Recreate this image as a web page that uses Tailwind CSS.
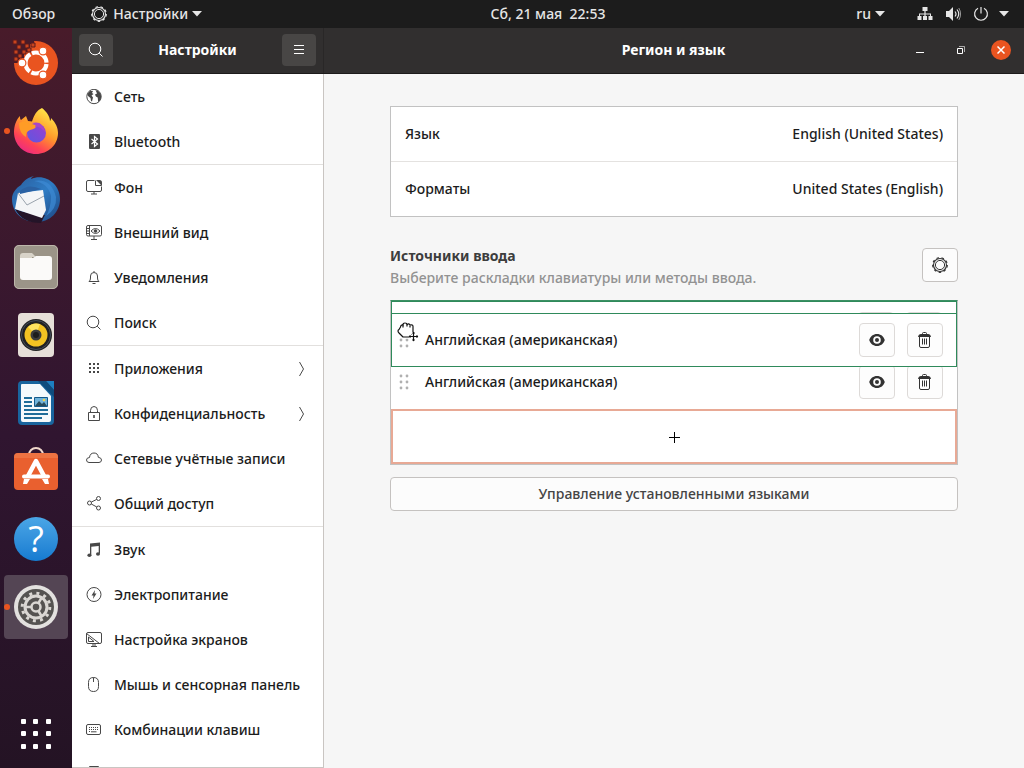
<!DOCTYPE html>
<html lang="ru">
<head>
<meta charset="utf-8">
<meta name="viewport" content="width=device-width, initial-scale=1">
<title>Настройки</title>
<script src="https://cdn.jsdelivr.net/npm/@tailwindcss/browser@4"></script>
</head>
<body class="flex h-screen flex-col overflow-hidden bg-[#f6f6f6] font-['Noto_Sans','Open_Sans',sans-serif] text-sm font-medium text-[#1c1c1c]">

<svg class="hidden" aria-hidden="true">
  <symbol id="gear" viewBox="0 0 16 16" fill="none" stroke="currentColor">
    <circle cx="8" cy="8" r="6.500" stroke-width="1.1"/>
    <circle cx="8" cy="8" r="4.600" stroke-width="1"/>
    <circle cx="8" cy="8" r="7.300" stroke-width="1.2" stroke-dasharray="2.550 2.550"/>
  </symbol>
  <symbol id="search" viewBox="0 0 16 16" fill="none" stroke="currentColor">
    <circle cx="7" cy="7" r="5.8"/><path d="M11.2 11.2 14.500 14.500"/>
  </symbol>
  <symbol id="eye" viewBox="0 0 16 16">
    <path fill="currentColor" fill-rule="evenodd" d="M8 2C4.200 2 1.400 4.300.2 8 1.400 11.700 4.200 14 8 14s6.600-2.300 7.800-6C14.600 4.300 11.800 2 8 2Zm0 2.200a3.800 3.800 0 1 1 0 7.600 3.800 3.800 0 0 1 0-7.600Z"/>
    <circle cx="8" cy="8" r="2" fill="currentColor"/>
  </symbol>
  <symbol id="trash" viewBox="0 0 16 16" fill="none" stroke="currentColor">
    <path d="M2.500 4.500v9.500q0 1.500 1.500 1.500h7q1.500 0 1.500-1.500V4.500M5.500 3V1.500q0-1 1-1h2q1 0 1 1V3M5.500 6.500v6M7.500 6.500v6M9.500 6.500v6"/>
    <path fill="currentColor" stroke="none" d="M1 5q.5-3 3-3h7q2.500 0 3 3Z"/>
  </symbol>
  <symbol id="chevron" viewBox="0 0 8 16" fill="none" stroke="currentColor">
    <path d="M1.500 1 5.500 8l-4 7"/>
  </symbol>
  <symbol id="grip" viewBox="0 0 10 16" fill="currentColor">
    <circle cx="2" cy="2" r="1.400"/><circle cx="8" cy="2" r="1.400"/><circle cx="2" cy="8" r="1.400"/><circle cx="8" cy="8" r="1.400"/><circle cx="2" cy="14" r="1.400"/><circle cx="8" cy="14" r="1.400"/>
  </symbol>
  <symbol id="caret" viewBox="0 0 10 6"><path fill="currentColor" d="M0 0h10L5 5.500Z"/></symbol>
</svg>

<header class="grid h-7 shrink-0 grid-cols-[1fr_auto_1fr] items-center bg-[#1c1c1c] pb-px text-[#e6e6e6]">
  <div class="flex items-center gap-9 pl-3">
    <button type="button">Обзор</button>
    <button type="button" class="flex items-center gap-1">
      <svg class="mr-0.5 size-4"><use href="#gear"/></svg>
      <span>Настройки</span>
      <svg class="h-[6px] w-[10px]"><use href="#caret"/></svg>
    </button>
  </div>
  <button type="button" class="pl-[72px] text-center whitespace-pre">Сб, 21 мая  22:53</button>
  <div class="flex items-center justify-end pr-[15px]">
    <button type="button" class="flex items-center gap-1 pr-8">ru <svg class="h-[6px] w-[10px]"><use href="#caret"/></svg></button>
    <button type="button" class="flex items-center gap-3" aria-label="Системное меню">
      <svg class="size-4" viewBox="0 0 16 16" fill="currentColor"><path d="M5.500 1h5v4H8.600v2.500H14V10h1.500v4h-4v-4H13V8.600H8.600V10H10v4H6v-4h1.400V8.600H3V10h1.500v4h-4v-4H2V7.500h5.400V5H5.500Z"/></svg>
      <svg class="size-4" viewBox="0 0 16 16"><path fill="currentColor" d="M1 5h3l4-4v14l-4-4H1Z"/><path fill="none" stroke="currentColor" stroke-width="1.200" d="M10 5.500q2 2.500 0 5M12 3.500q3.500 4.500 0 9"/><path fill="none" stroke="#999" d="M13.800 2q3.600 6 0 12"/></svg>
      <svg class="size-4" viewBox="0 0 16 16" fill="none" stroke="currentColor" stroke-width="1.200"><path d="M5 2.200a6.400 6.400 0 1 0 6 0M8 1v6.500"/></svg>
      <svg class="-ml-0.5 h-[6px] w-[10px]"><use href="#caret"/></svg>
    </button>
  </div>
</header>

<div class="flex min-h-0 flex-1">
  <nav class="flex w-[72px] shrink-0 flex-col items-center gap-1 bg-linear-to-b from-[#481b2a] via-[#301530] via-55% to-[#241324] pt-[3px]" aria-label="Избранное">
    <button type="button" aria-label="Установить Ubuntu" class="flex size-16 items-center justify-center">
      <svg class="size-12" viewBox="0 0 48 48"><circle cx="24" cy="24" r="22" fill="#e95420"/><path fill="#481b2a" d="M0 0h22v5h-4v4h-3v4h-3v6H8v5H0Z"/><g fill="#c8441e" stroke="#5a1a1c"><path d="M1 1h4v4H1zM9 1h4v4H9zM5 6h4v4H5zM13 5h4v4h-4zM2 11h4v4H2zM19 4h4v4h-4zM10 11h4v4h-4zM6 15h4v4H6zM2 18h4v4H2zM15 9h4v4h-4z"/></g><circle cx="24" cy="24" r="10.500" fill="none" stroke="#fff" stroke-width="4.200" stroke-dasharray="20.200 1.790" stroke-dashoffset="-1"/><g fill="#fff" stroke="#e95420" stroke-width="1.200"><circle cx="10" cy="24" r="3.900"/><circle cx="31" cy="12" r="3.900"/><circle cx="31" cy="36" r="3.900"/></g></svg>
    </button>
    <button type="button" aria-label="Firefox" class="relative flex size-16 items-center justify-center">
      <span class="absolute left-0 size-[6px] rounded-full bg-[#e95420]"></span>
      <svg class="size-12" viewBox="0 0 48 48"><defs><linearGradient id="ff" x1=".8" y1="0" x2=".2" y2="1"><stop offset="0" stop-color="#fff14d"/><stop offset=".45" stop-color="#ff9a2a"/><stop offset=".75" stop-color="#ff4355"/><stop offset="1" stop-color="#e8268a"/></linearGradient><linearGradient id="fp" x1="0" y1="1" x2="1" y2="0"><stop offset="0" stop-color="#5e56e0"/><stop offset="1" stop-color="#9b3fd0"/></linearGradient></defs><path fill="url(#ff)" d="M30 1c5 4 8 9 8 13 1-1 1-2 1-3 5 5 7 10 7 15C46 38 36 47 24 47S2 38 2 25C2 19 4 13 8 9c0 2 0 3 1 4l5-4 2 5 4 .500C22 8 25 3 30 1Z"/><circle cx="24.500" cy="26" r="9.500" fill="url(#fp)"/><path fill="#ff9c26" d="M7 16q7-4 11 1l7 1q-1 4-7 5-5 2-4 7-7-4-7-14Z"/><path fill="#a846c8" d="M20 16q11-3 13 9-5-6-10-5 2-2-3-4Z"/></svg>
    </button>
    <button type="button" aria-label="Thunderbird" class="flex size-16 items-center justify-center">
      <svg class="size-12" viewBox="0 0 48 48"><defs><linearGradient id="tb" x1="0" y1="0" x2="1" y2="1"><stop offset="0" stop-color="#2a5c9c"/><stop offset=".5" stop-color="#2f7cc4"/><stop offset="1" stop-color="#1c4480"/></linearGradient></defs><path fill="url(#tb)" d="M22 1c-2 1-3 2-3 3 14-6 29 5 29 20 0 13-10 23-23 23C11 47 0 38 0 24c0-6 4-11 9-14C12 5 17 2 22 1Z"/><path fill="#241428" d="M3 34q12 5 30 6l-4 8Q10 48 3 34Z"/><path fill="#f4f5f7" d="m6 18 25-3 3 20-4 8L3 34Z"/><path fill="none" stroke="#9aa3ad" d="m6 18 9 12 17-9"/><path fill="#3d8ad4" d="M22 6q14 2 17 15 0 12-5 20 11-7 10-19Q39 3 22 6Z" opacity=".7"/><path fill="#2b62a4" d="M8 16q8-8 21-2l-21 5Z"/></svg>
    </button>
    <button type="button" aria-label="Файлы" class="flex size-16 items-center justify-center">
      <svg class="size-12" viewBox="0 0 48 48"><rect x="2" y="2" width="44" height="44" rx="5" fill="#9b9488"/><rect x="2.500" y="2.500" width="43" height="43" rx="4.500" fill="none" stroke="#bdb7ab"/><path fill="#d8d3c9" d="M8 13q0-3 3-3h9l4 4h-4v6H8Z"/><path fill="#fbfaf9" d="M8 15h13l3-2h13q3 0 3 3v18q0 3-3 3H11q-3 0-3-3Z"/></svg>
    </button>
    <button type="button" aria-label="Rhythmbox" class="flex size-16 items-center justify-center">
      <svg class="size-12" viewBox="0 0 48 48"><rect x="6" y="2" width="36" height="44" rx="4" fill="#e6dfd8"/><circle cx="24" cy="24" r="16" fill="#222"/><circle cx="24" cy="24" r="14.500" fill="none" stroke="#444c5c"/><circle cx="24" cy="24" r="11.500" fill="#f3c322"/><path fill="#ffe460" d="M24 24 16 16q5-5 12-3Z"/><circle cx="24" cy="24" r="5.500" fill="#3c3c3c"/><circle cx="24" cy="24" r="3" fill="#1d1d1d"/></svg>
    </button>
    <button type="button" aria-label="LibreOffice Writer" class="flex size-16 items-center justify-center">
      <svg class="size-12" viewBox="0 0 48 48"><path fill="#19659e" d="M10 2h20l12 13v27q0 4-4 4H10q-4 0-4-4V6q0-4 4-4Z"/><path fill="#f5fafc" d="M10 5h18l11 12v24q0 2-2 2H11q-2 0-2-2V6q0-1 1-1Z"/><path fill="#0f4c7d" d="M26 2h8l8 9v7Z"/><path fill="#1d7fc0" d="M34 2h8v9Z"/><g stroke="#1f6d99" stroke-width="2"><path d="M12 19h8M12 23h8M12 27h8M12 31h24M12 35h24M12 39h18"/></g><path fill="#6fb3da" stroke="#155a8a" d="M22.500 18.500h13v9h-13z"/><path fill="#264b5c" d="m23 27 4-5 3 3 2-2 3 4Z"/><circle cx="32" cy="21" r="1.300" fill="#f3d24b"/></svg>
    </button>
    <button type="button" aria-label="Ubuntu Software" class="flex size-16 items-center justify-center">
      <svg class="size-12" viewBox="0 0 48 48"><path fill="none" stroke="#f1d8cb" stroke-width="2" d="M17 11v-3a7 7 0 0 1 14 0v3"/><rect x="2" y="6" width="44" height="37" rx="4" fill="#e9602f"/><path fill="#f08050" d="M6 6h36q4 0 4 4v1H2v-1q0-4 4-4Z" opacity=".6"/><path fill="none" stroke="#fff" stroke-width="4.500" stroke-linejoin="round" d="M16 29 24 14l8 15"/><path fill="none" stroke="#fff" stroke-width="4" stroke-linecap="round" d="M12 29.500h24"/><path fill="#fff" d="M12 32h6l-3 5h-4zM30 32h6l1 5h-4z"/></svg>
    </button>
    <button type="button" aria-label="Справка" class="flex size-16 items-center justify-center">
      <span class="flex size-11 items-center justify-center rounded-full bg-linear-to-b from-[#4aa6e6] to-[#157bd0] font-['Open_Sans'] text-4xl font-normal text-white">?</span>
    </button>
    <button type="button" aria-label="Настройки" class="relative flex size-16 items-center justify-center rounded bg-[#544554]">
      <span class="absolute left-0 size-[6px] rounded-full bg-[#e95420]"></span>
      <svg class="size-12" viewBox="0 0 48 48"><circle cx="24" cy="24" r="22" fill="#e3e1df"/><circle cx="24" cy="24" r="18" fill="#555351"/><g fill="none" stroke="#dad7d3"><circle cx="24" cy="24" r="11" stroke-width="3"/><circle cx="24" cy="24" r="13.800" stroke-width="3" stroke-dasharray="3 4.225"/><circle cx="24" cy="24" r="4.500" stroke-width="2.500"/><path stroke-width="2.500" d="M19 24h-6M26.500 20l3.500-6M26.500 28l3.500 6"/></g></svg>
    </button>
    <button type="button" aria-label="Показать приложения" class="mt-auto mb-[14px] p-1">
      <svg class="size-8" viewBox="0 0 32 32" fill="#fff"><rect x="1" y="1" width="5" height="5" rx="1"/><rect x="13" y="1" width="5" height="5" rx="1"/><rect x="26" y="1" width="5" height="5" rx="1"/><rect x="1" y="13" width="5" height="5" rx="1"/><rect x="13" y="13" width="5" height="5" rx="1"/><rect x="26" y="13" width="5" height="5" rx="1"/><rect x="1" y="26" width="5" height="5" rx="1"/><rect x="13" y="26" width="5" height="5" rx="1"/><rect x="26" y="26" width="5" height="5" rx="1"/></svg>
    </button>
  </nav>

  <section class="flex min-w-0 flex-1 flex-col">
    <div class="flex h-[46px] shrink-0 border-b border-[#1d1b1b] bg-[#312f2f] text-white">
      <div class="flex w-[252px] shrink-0 items-center justify-between border-r border-[#292727] px-[7px] pb-px">
        <button type="button" aria-label="Поиск" class="flex h-8 w-[34px] items-center justify-center rounded bg-[#484645]"><svg class="size-4"><use href="#search"/></svg></button>
        <h1 class="font-bold">Настройки</h1>
        <button type="button" aria-label="Меню" class="flex h-8 w-[34px] items-center justify-center rounded bg-[#484645]"><svg class="size-4" viewBox="0 0 16 16" stroke="currentColor"><path d="M3 3.500h10M3 7.500h10M3 11.500h10"/></svg></button>
      </div>
      <div class="grid flex-1 grid-cols-[1fr_auto_1fr] items-center pr-[13px] pb-px">
        <h2 class="col-start-2 pl-3 font-bold">Регион и язык</h2>
        <div class="flex items-center justify-end gap-6">
          <button type="button" aria-label="Свернуть"><svg class="size-4" viewBox="0 0 16 16" stroke="currentColor"><path d="M4 10.500h8"/></svg></button>
          <button type="button" aria-label="Восстановить"><svg class="size-4" viewBox="0 0 16 16" fill="none" stroke="currentColor"><path d="M5.500 6.500h5v5h-5z"/><path opacity=".6" d="M7 4.500h5.500V10"/></svg></button>
          <button type="button" aria-label="Закрыть" class="-ml-px flex size-5 items-center justify-center rounded-full bg-[#e95420]"><svg class="size-2" viewBox="0 0 8 8" stroke="currentColor" stroke-width="1.500"><path d="m.5.5 7 7M7.500.5l-7 7"/></svg></button>
        </div>
      </div>
    </div>

    <div class="flex min-h-0 flex-1">
      <aside class="w-[252px] shrink-0 overflow-hidden border-r border-b border-[#c9c5c2] bg-white">
        <ul class="divide-y divide-[#e2e0de] [&_svg]:text-[#484848]">
          <li>
            <a href="#net" class="flex h-[45px] items-center gap-3 px-[14px]"><svg class="size-4 shrink-0" viewBox="0 0 16 16"><circle cx="8" cy="7.500" r="7.200" fill="none" stroke="currentColor"/><path fill="currentColor" d="M1.500 5 4 2l3 0-1 2 1.500 1-2 1.500 1.500 2L6 12.500 5 12l-.5-3L2 7ZM9.500 1q5 1 5.700 6.500-.2 4-3 5.500l-.5-4.500-1.800-1L9 5.500l2-1Z"/></svg>Сеть</a>
            <a href="#bt" class="flex h-[45px] items-center gap-3 px-[14px]"><svg class="size-4 shrink-0" viewBox="0 0 16 16"><rect x="3" width="11" height="15" rx="1" fill="currentColor"/><path fill="none" stroke="#fff" stroke-width="1.200" d="m5.500 5 6 5-3 2.500v-10l3 2.500-6 5"/></svg>Bluetooth</a>
          </li>
          <li>
            <a href="#bg" class="flex h-[45px] items-center gap-3 px-[14px]"><svg class="size-4 shrink-0" viewBox="0 0 16 16" fill="none" stroke="currentColor"><path d="M8.500.500H2Q.500.500.500 2v8q0 1.500 1.500 1.500h12q1.500 0 1.500-1.500V6.500M5 14h6M8 12v2"/><path d="M9.500.500v5h6"/><path fill="currentColor" stroke="none" d="M10 0h3.500Q16 0 16 2.500V6Z"/></svg>Фон</a>
            <a href="#look" class="flex h-[45px] items-center gap-3 px-[14px]"><svg class="size-4 shrink-0" viewBox="0 0 16 16" fill="none" stroke="currentColor"><path d="M2 .500h12q1.500 0 1.500 1.500v7.500q0 1.500-1.500 1.500H2Q.500 11 .500 9.500V2Q.500.500 2 .500ZM3.500.500V11M.500 3.500h3M.500 6h3M.500 8.500h3M5 14.500h6M8 11v3.500M5 6q4.500-5 9 0-4.500 5-9 0Z"/><circle cx="9.500" cy="6" r="1.300" fill="currentColor"/></svg>Внешний вид</a>
            <a href="#notify" class="flex h-[45px] items-center gap-3 px-[14px]"><svg class="size-4 shrink-0" viewBox="0 0 16 16" fill="none" stroke="currentColor"><path d="M8 1v1M3 11.500q1.500-1 1.500-3.500V6Q4.500 2.500 8 2.500T11.500 6v2q0 2.500 1.500 3.500ZM6.500 13.500h3"/></svg>Уведомления</a>
            <a href="#search-settings" class="flex h-[45px] items-center gap-3 px-[14px]"><svg class="size-4 shrink-0"><use href="#search"/></svg>Поиск</a>
          </li>
          <li>
            <a href="#apps" class="flex h-[45px] items-center gap-3 px-[14px]"><svg class="size-4 shrink-0" viewBox="0 0 16 16" fill="currentColor"><path d="M3 2h2v2H3zM7 2h2v2H7zM11 2h2v2h-2zM3 6h2v2H3zM7 6h2v2H7zM11 6h2v2h-2zM3 10h2v2H3zM7 10h2v2H7zM11 10h2v2h-2z"/></svg><span class="flex-1">Приложения</span><svg class="mr-[3px] h-4 w-2"><use href="#chevron"/></svg></a>
            <a href="#privacy" class="flex h-[45px] items-center gap-3 px-[14px]"><svg class="size-4 shrink-0" viewBox="0 0 16 16" fill="none" stroke="currentColor"><path d="M2.500 6.500h11v8h-11zM4.500 6.500V4.500q0-4 3.500-4t3.500 4v2"/><path fill="currentColor" stroke="none" d="M7.200 9h1.600v3H7.200z"/></svg><span class="flex-1">Конфиденциальность</span><svg class="mr-[3px] h-4 w-2"><use href="#chevron"/></svg></a>
            <a href="#accounts" class="flex h-[45px] items-center gap-3 px-[14px]"><svg class="size-4 shrink-0" viewBox="0 0 16 16" fill="none" stroke="currentColor"><path d="M3 11.500Q.500 11.300.500 9T3.500 6.500Q4 2 8 2t4.300 4.300q3.200.400 3.200 2.700t-2.500 2.500Z"/></svg>Сетевые учётные записи</a>
            <a href="#sharing" class="flex h-[45px] items-center gap-3 px-[14px]"><svg class="size-4 shrink-0" viewBox="0 0 16 16" fill="none" stroke="currentColor"><circle cx="3.500" cy="7" r="2"/><circle cx="12.500" cy="2.500" r="2"/><circle cx="12.500" cy="12" r="2"/><path d="m5.300 6.100 5.400-2.700M5.300 8l5.500 3"/></svg>Общий доступ</a>
          </li>
          <li>
            <a href="#sound" class="flex h-[45px] items-center gap-3 px-[14px]"><svg class="size-4 shrink-0" viewBox="0 0 16 16" fill="currentColor"><path d="M4 1.500 14 .500v11h-1.300V4L5.300 4.700v8.800H4Z"/><ellipse cx="3.400" cy="13.200" rx="2" ry="1.700"/><ellipse cx="12" cy="12" rx="2" ry="1.700"/></svg>Звук</a>
            <a href="#power" class="flex h-[45px] items-center gap-3 px-[14px]"><svg class="size-4 shrink-0" viewBox="0 0 16 16"><circle cx="8" cy="7.500" r="7" fill="none" stroke="currentColor"/><path fill="currentColor" d="M9 3 5.500 8.500h2L7 12l3.500-5.500h-2Z"/></svg>Электропитание</a>
            <a href="#displays" class="flex h-[45px] items-center gap-3 px-[14px]"><svg class="size-4 shrink-0" viewBox="0 0 16 16" fill="none" stroke="currentColor"><path d="M2 .500h12q1.500 0 1.500 1.500v8q0 1.500-1.500 1.500H2Q.500 11.500.500 10V2Q.500.500 2 .500ZM.500 1.500l13 10M2.500 5v4.500H8ZM6 13h4M5 14.500h6"/></svg>Настройка экранов</a>
            <a href="#mouse" class="flex h-[45px] items-center gap-3 px-[14px]"><svg class="size-4 shrink-0" viewBox="0 0 16 16" fill="none" stroke="currentColor"><path d="M7.500.500q5 0 5 5v4q0 5-5 5t-5-5v-4q0-5 5-5ZM7.500.500V5"/></svg>Мышь и сенсорная панель</a>
            <a href="#keys" class="flex h-[45px] items-center gap-3 px-[14px]"><svg class="size-4 shrink-0" viewBox="0 0 16 16" fill="none" stroke="currentColor"><rect x=".5" y="2.500" width="14" height="10" rx="1.500"/><path stroke-dasharray="1 1" d="M3 5.500h10M3 7.500h10M3 9.500h1"/><path d="M5 9.800h5.500"/></svg>Комбинации клавиш</a>
            <a href="#printers" aria-label="Принтеры" class="flex h-[45px] items-start px-[14px] pt-[14px]"><svg class="size-4 shrink-0" viewBox="0 0 16 16" fill="none" stroke="currentColor"><path d="M3.500 5V.500h9V5M.500 5.500h15v7H.500z"/></svg></a>
          </li>
        </ul>
      </aside>

      <main class="min-w-0 flex-1 overflow-hidden px-[66px] pt-8">
        <div class="divide-y divide-[#e4e2e0] border border-[#c2c2c2] bg-white">
          <button type="button" class="flex h-[55px] w-full items-center justify-between px-[14px]"><span>Язык</span><span>English (United States)</span></button>
          <button type="button" class="flex h-[54px] w-full items-center justify-between px-[14px]"><span>Форматы</span><span>United States (English)</span></button>
        </div>

        <div class="mt-7 flex items-center justify-between">
          <div class="pb-px leading-[22px]">
            <h3 class="font-bold text-[#3d3d3d]">Источники ввода</h3>
            <p class="text-[#929292]">Выберите раскладки клавиатуры или методы ввода.</p>
          </div>
          <button type="button" aria-label="Параметры" class="mb-1.5 flex h-[34px] w-9 items-center justify-center rounded border border-[#c5c2c0] bg-[#fcfcfc] text-[#333]"><svg class="size-4"><use href="#gear"/></svg></button>
        </div>

        <div class="relative mt-[10px] border border-[#c2c2c2] border-t-[#3c9064] bg-white">
          <div class="flex h-[54px] items-center justify-end gap-3 border border-b-0 border-[#2f8a5b] px-[14px]">
            <span class="h-[34px] w-9 rounded border border-[#dddad8]"></span>
            <span class="h-[34px] w-9 rounded border border-[#dddad8]"></span>
          </div>
          <div class="flex h-[54px] items-center gap-3 pr-[14px] pl-2">
            <svg class="h-4 w-[10px] text-[#b0b0b0]"><use href="#grip"/></svg>
            <span class="flex-1 pl-1">Английская (американская)</span>
            <button type="button" aria-label="Просмотр" class="flex h-[34px] w-9 items-center justify-center rounded border border-[#dddad8] bg-[#fdfdfd] text-[#333]"><svg class="size-4"><use href="#eye"/></svg></button>
            <button type="button" aria-label="Удалить" class="flex h-[34px] w-9 items-center justify-center rounded border border-[#dddad8] bg-[#fdfdfd] text-[#333]"><svg class="size-4"><use href="#trash"/></svg></button>
          </div>
          <button type="button" aria-label="Добавить" class="flex h-[55px] w-full items-center justify-center border-2 border-[#e8a995] text-black"><svg class="size-4" viewBox="0 0 16 16" stroke="currentColor"><path d="M8.500 3v11M3 8.500h11"/></svg></button>

          <div class="absolute inset-x-0 top-3 flex h-[54px] items-center gap-3 border border-[#2f8a5b] bg-white pr-[13px] pl-[7px]">
            <svg class="h-4 w-[10px] text-[#b0b0b0]"><use href="#grip"/></svg>
            <span class="flex-1 pl-1">Английская (американская)</span>
            <button type="button" aria-label="Просмотр" class="flex h-[34px] w-9 items-center justify-center rounded border border-[#dddad8] bg-[#fdfdfd] text-[#333]"><svg class="size-4"><use href="#eye"/></svg></button>
            <button type="button" aria-label="Удалить" class="flex h-[34px] w-9 items-center justify-center rounded border border-[#dddad8] bg-[#fdfdfd] text-[#333]"><svg class="size-4"><use href="#trash"/></svg></button>
            <svg class="absolute top-2 left-1 h-5 w-6" viewBox="0 0 24 20" fill="none" stroke="#111" stroke-width="1.200" stroke-linejoin="round"><path fill="#fff" stroke="#fff" stroke-width="3" d="M7 15 3 10.500Q1.500 8.500 3 7.500L4.500 4 18 3.500V11l-2 4Z"/><path fill="#fff" d="M7 15 3 11Q1 8.500 3 7.500L4.500 5Q5 2.500 7 3q0-2 2-2t2 1.500q2-1.500 3 .500 3-.8 3 1.500v6.500l-2 4Z"/><path d="M7 3v2.500M11 2.500v2M14 3.500v2"/><path stroke="#fff" stroke-width="3" d="M17.500 10v9M13 14.500h9"/><path d="M17.500 10.500v8M13.500 14.500h8M16.500 11.500l1-1 1 1M16.500 17.500l1 1 1-1M14.500 13.500l-1 1 1 1M20.500 13.500l1 1-1 1"/></svg>
          </div>
        </div>

        <button type="button" class="mt-3 h-[34px] w-full rounded border border-[#c5c2c0] bg-[#fcfcfc] text-[#444]">Управление установленными языками</button>
      </main>
    </div>
  </section>
</div>
</body>
</html>
